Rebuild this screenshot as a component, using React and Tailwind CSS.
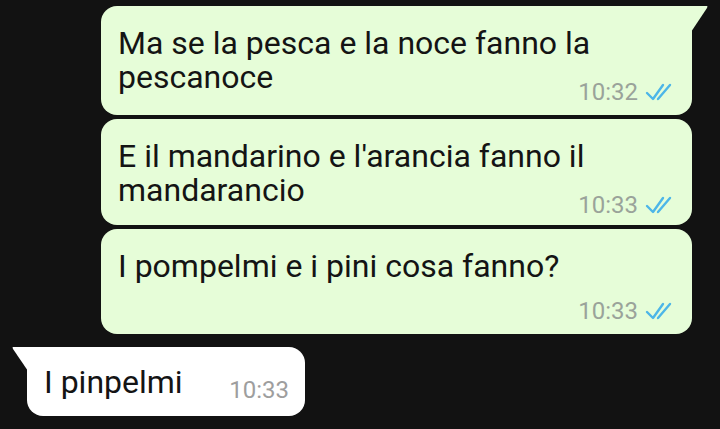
import React from 'react';

const font = { fontFamily: 'Roboto, "Liberation Sans", sans-serif' };

const Ticks = () => (
  <svg width="34" height="20" viewBox="0 0 34 20" fill="none" stroke="#4db6e8" strokeWidth="2.4" strokeLinecap="round" strokeLinejoin="round">
    <path d="M3 11 L9 17 L19 3" />
    <path d="M14 17 L26 3" />
  </svg>
);

const Time = ({ time, className = '' }) => (
  <div className={`h-[28px] flex items-center justify-end gap-[6px] shrink-0 ${className}`}>
    <span className="text-[24px] text-[#9aa39a]">{time}</span>
    <Ticks />
  </div>
);

const OutBubble = ({ first, last, time, tail, h }) => (
  <div className={`relative ml-[101px] mr-[28px] ${h} flex flex-col bg-[#e6fdd8] pl-[17px] pr-[14px] pt-[20px] pb-[9px] text-[32px] leading-[34px] text-[#141414] ${tail ? 'rounded-[16px] rounded-tr-none' : 'rounded-[16px]'}`}>
    {tail && (
      <svg className="absolute right-[-16px] top-0" width="17" height="26" viewBox="0 0 17 26">
        <path d="M0 0 L16 0 Q17 0 16 2 L0 26 Z" fill="#e6fdd8" />
      </svg>
    )}
    <p>{first}</p>
    {last ? (
      <div className="flex items-start justify-between">
        <span>{last}</span>
        <Time time={time} className="mt-[18px]" />
      </div>
    ) : (
      <Time time={time} className="mt-auto" />
    )}
  </div>
);

export default function App() {
  return (
    <div className="w-[720px] h-[429px] overflow-hidden bg-[#121212] pt-[6px] flex flex-col" style={font}>
      <div className="flex flex-col gap-[4px]">
        <OutBubble tail h="h-[109px]" first="Ma se la pesca e la noce fanno la" last="pescanoce" time="10:32" />
        <OutBubble h="h-[106px]" first="E il mandarino e l'arancia fanno il" last="mandarancio" time="10:33" />
        <OutBubble h="h-[105px]" first="I pompelmi e i pini cosa fanno?" time="10:33" />
      </div>
      <div className="mt-[13px] relative ml-[27px] w-[278px] h-[69px] rounded-[16px] rounded-tl-none bg-white flex items-center pl-[17px] pr-[16px]">
        <svg className="absolute left-[-15px] top-0" width="16" height="24" viewBox="0 0 16 24">
          <path d="M16 0 L1 0 Q0 0 1 2 L16 24 Z" fill="#ffffff" />
        </svg>
        <span className="text-[32px] text-[#141414]">I pinpelmi</span>
        <span className="ml-auto mt-[16px] text-[24px] text-[#9e9e9e]">10:33</span>
      </div>
    </div>
  );
}
